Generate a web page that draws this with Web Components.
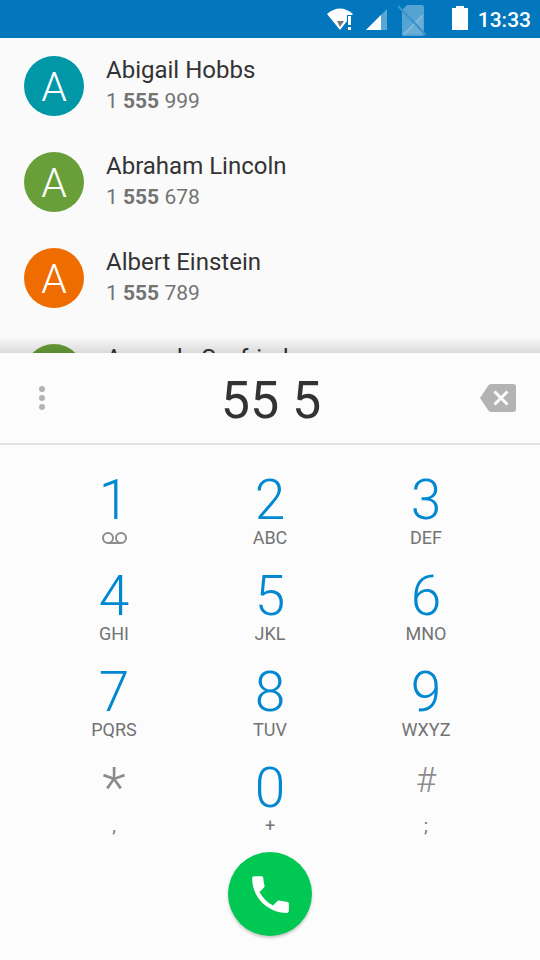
<!DOCTYPE html>
<html lang="en">
<head>
<meta charset="utf-8">
<meta name="viewport" content="width=device-width, initial-scale=1">
<title>Phone</title>
<style>
  html, body { margin: 0; height: 100%; }
  body { font-family: Roboto, "Noto Sans", sans-serif; color: #333; background: #fafafa; }
</style>
</head>
<body>
<dialer-app></dialer-app>

<script>
const define = (name, markup, setup) => {
  const template = document.createElement('template');
  template.innerHTML = markup;
  customElements.define(name, class extends HTMLElement {
    connectedCallback() {
      if (this.shadowRoot) return;
      this.attachShadow({ mode: 'open' }).append(template.content.cloneNode(true));
      if (setup) setup.call(this, this.shadowRoot);
    }
  });
};

define('status-bar', `
  <style>
    :host { display: flex; box-sizing: border-box; flex: none; align-items: center; justify-content: flex-end; height: 38px; padding: 2px 9px 0 0; background: #0277bd; color: #fff; }
    svg { display: block; flex: none; }
    time { font-size: 21px; line-height: 24px; font-weight: 500; margin-left: 10px; }
    .wifi { margin-right: 13px; }
    .signal { margin: 0 11px 2px 0; }
    .sim { margin-right: 25px; }
    .battery { margin-bottom: 4px; }
  </style>
  <svg class="wifi" width="26" height="24" viewBox="0 0 26 24" aria-label="Wi-Fi, no internet">
    <path fill="#fff" d="M0 6Q13-5 26 6L25 7H20V13L13 22Z"/>
    <path fill="#777" d="M10 13H17L13 19Z"/>
    <path fill="#fff" d="M21 8H24V17H21ZM21 19H24V22H21Z"/>
  </svg>
  <svg class="signal" width="21" height="21" viewBox="0 0 21 21" aria-label="Signal">
    <path fill="#fff" fill-opacity=".35" d="M21 0V21H0Z"/>
    <path fill="#fff" d="M15 6V21H0Z"/>
  </svg>
  <svg class="sim" width="29" height="32" viewBox="0 0 29 32" aria-label="No SIM">
    <path fill="#fff" fill-opacity=".33" d="M9 1H24Q26 1 26 3V30Q26 32 24 32H6Q4 32 4 30V6Z"/>
    <path fill="#fff" fill-opacity=".12" d="M25 11V30H6Z"/>
    <path d="M5 31L25 11" stroke="#fff" stroke-opacity=".2" stroke-width="2"/>
    <path d="M0 2L28 31" stroke="#3b92c8" stroke-width="2"/>
  </svg>
  <svg class="battery" width="16" height="24" viewBox="0 0 16 24" aria-label="Battery">
    <path fill="#fff" d="M4 0H12V2H16V24H0V2H4Z"/>
  </svg>
  <time>13:33</time>
`);

define('contact-item', `
  <style>
    :host { display: block; flex: none; }
    button { all: unset; box-sizing: border-box; display: flex; align-items: flex-start; gap: 22px; width: 100%; height: 96px; padding: 16px 24px; cursor: pointer; }
    .avatar { box-sizing: border-box; flex: none; width: 60px; height: 60px; margin-top: 2px; border-radius: 50%; background: var(--avatar); color: #fff; font-size: 41px; line-height: 62px; font-weight: 300; text-align: center; }
    .text { display: flex; flex-direction: column; min-width: 0; }
    .name { font-size: 24px; line-height: 32px; }
    .number { font-size: 21px; line-height: 30px; color: #737373; }
  </style>
  <button type="button">
    <span class="avatar" aria-hidden="true"></span>
    <span class="text">
      <span class="name"><slot name="name"></slot></span>
      <span class="number"><slot></slot></span>
    </span>
  </button>
`, function (root) {
  root.querySelector('.avatar').textContent = this.querySelector('[slot=name]').textContent[0];
});

define('contact-list', `
  <style>
    :host { display: flex; flex-direction: column; flex: 1 1 0; min-height: 0; overflow: hidden; position: relative; }
    :host::after { content: ""; position: absolute; inset: auto 0 0; height: 16px; background: linear-gradient(transparent, rgba(0,0,0,.13)); pointer-events: none; }
  </style>
  <slot></slot>
`);

define('number-field', `
  <style>
    :host { display: flex; align-items: center; height: 90px; border-bottom: 2px solid #e1e1e1; }
    button { all: unset; flex: none; display: grid; place-items: center; width: 84px; height: 90px; cursor: pointer; }
    input { all: unset; flex: 1; min-width: 0; text-align: center; font-size: 52px; line-height: 62px; height: 62px; color: #333; padding: 6px 0 0 2px; }
    svg { display: block; }
  </style>
  <button type="button" aria-label="More options">
    <svg width="6" height="24" viewBox="0 0 6 24" fill="#b3b3b3"><circle cx="3" cy="3" r="3"/><circle cx="3" cy="12" r="3"/><circle cx="3" cy="21" r="3"/></svg>
  </button>
  <input type="tel" aria-label="Phone number" value="55 5">
  <button type="button" aria-label="Backspace">
    <svg width="36" height="28" viewBox="0 0 36 28"><path fill="#b3b3b3" d="M11 0H33Q36 0 36 3V25Q36 28 33 28H11Q9 28 8 26L0 14L8 2Q9 0 11 0Z"/><path d="M14.500 7.500L27.500 20.500M27.500 7.500L14.500 20.500" stroke="#fcfcfc" stroke-width="3"/></svg>
  </button>
`);

define('dial-key', `
  <style>
    :host { display: block; }
    button { all: unset; box-sizing: border-box; display: flex; flex-direction: column; align-items: center; width: 100%; height: 96px; padding-top: 11px; cursor: pointer; }
    .digit { font-size: 55px; line-height: 56px; height: 56px; font-weight: 300; color: #0288d1; }
    :host([symbol]) .digit { color: #8c8c8c; }
    :host([symbol="pound"]) .digit { font-size: 35px; line-height: 42px; }
    .label { display: flex; align-items: center; height: 20px; font-size: 18px; line-height: 20px; color: #737373; }
  </style>
  <button type="button"><span class="digit"><slot></slot></span><span class="label"><slot name="label"></slot></span></button>
`);

define('voicemail-icon', `
  <style>:host, svg { display: block; }</style>
  <svg width="25" height="12" viewBox="0 0 25 12" fill="none" stroke="#8c8c8c" stroke-width="2" aria-label="Voicemail"><circle cx="6" cy="6" r="5"/><circle cx="19" cy="6" r="5"/><path d="M6 11H19"/></svg>
`);

define('dial-pad', `
  <style>:host { display: grid; grid-template-columns: repeat(3, 1fr); padding: 16px 36px 0; }</style>
  <slot></slot>
`);

define('call-button', `
  <style>
    :host { display: flex; justify-content: center; padding: 7px 0 24px; }
    button { all: unset; display: grid; place-items: center; width: 84px; height: 84px; border-radius: 50%; background: #00c853; box-shadow: 0 2px 3px rgba(0,0,0,.22); cursor: pointer; }
    svg { display: block; }
  </style>
  <button type="button" aria-label="Call">
    <svg width="49" height="49" viewBox="0 0 24 24" fill="#fff"><path d="M6.620 10.790c1.440 2.830 3.760 5.140 6.590 6.590l2.200-2.200c.27-.27.67-.36 1.020-.24 1.120.37 2.330.57 3.570.57.55 0 1 .45 1 1V20c0 .55-.45 1-1 1-9.390 0-17-7.610-17-17 0-.55.45-1 1-1h3.500c.55 0 1 .45 1 1 0 1.250.2 2.450.57 3.570.11.35.03.74-.25 1.020l-2.200 2.200z"/></svg>
  </button>
`);

define('dialer-panel', `
  <style>:host { display: block; flex: none; background: #fcfcfc; }</style>
  <slot></slot>
`);

define('dialer-app', `
  <style>
    :host { display: flex; flex-direction: column; height: 100vh; }
    b { font-weight: 700; }
  </style>
  <status-bar></status-bar>
  <contact-list>
    <contact-item style="--avatar:#0097a7"><span slot="name">Abigail Hobbs</span>1 <b>555</b> 999</contact-item>
    <contact-item style="--avatar:#689f38"><span slot="name">Abraham Lincoln</span>1 <b>555</b> 678</contact-item>
    <contact-item style="--avatar:#ef6c00"><span slot="name">Albert Einstein</span>1 <b>555</b> 789</contact-item>
    <contact-item style="--avatar:#689f38"><span slot="name">Amanda Seyfried</span></contact-item>
  </contact-list>
  <dialer-panel>
    <number-field></number-field>
    <dial-pad>
      <dial-key>1<voicemail-icon slot="label"></voicemail-icon></dial-key>
      <dial-key>2<span slot="label">ABC</span></dial-key>
      <dial-key>3<span slot="label">DEF</span></dial-key>
      <dial-key>4<span slot="label">GHI</span></dial-key>
      <dial-key>5<span slot="label">JKL</span></dial-key>
      <dial-key>6<span slot="label">MNO</span></dial-key>
      <dial-key>7<span slot="label">PQRS</span></dial-key>
      <dial-key>8<span slot="label">TUV</span></dial-key>
      <dial-key>9<span slot="label">WXYZ</span></dial-key>
      <dial-key symbol="star">*<span slot="label">,</span></dial-key>
      <dial-key>0<span slot="label">+</span></dial-key>
      <dial-key symbol="pound">#<span slot="label">;</span></dial-key>
    </dial-pad>
    <call-button></call-button>
  </dialer-panel>
`);
</script>
</body>
</html>
